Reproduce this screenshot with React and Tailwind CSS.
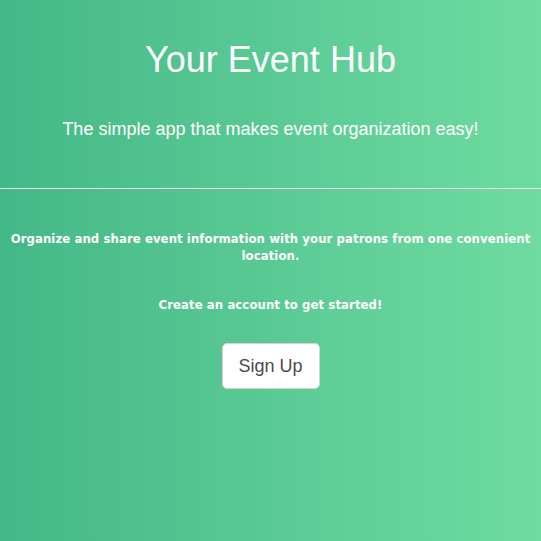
export default function App() {
  return (
    <div className="w-[541px] h-[541px] bg-gradient-to-r from-[#43b888] to-[#6fdba0] text-white overflow-hidden">
      <div className="text-center font-['Liberation_Sans',Arial,sans-serif]">
        <h1 className="pt-[38px] text-[36px] leading-[44px]">Your Event Hub</h1>
        <p className="mt-[36px] text-[18px] leading-[22px]">The simple app that makes event organization easy!</p>
      </div>
      <div className="mt-[48px] h-px bg-white/90" />
      <div className="px-[6px] text-center font-['DejaVu_Sans_Condensed','DejaVu_Sans',Verdana,sans-serif] font-stretch-condensed text-[13px] tracking-[0.08px] font-bold leading-[17px]">
        <p className="mt-[41px]">Organize and share event information with your patrons from one convenient location.</p>
        <p className="mt-[32px]">Create an account to get started!</p>
        <button className="mt-[30px] w-[98px] h-[46px] rounded-[5px] border border-[#d4d4d4] bg-white text-[#4a4a4a] font-['Liberation_Sans',Arial,sans-serif] font-normal font-stretch-normal tracking-normal text-[18px]">Sign Up</button>
      </div>
    </div>
  );
}
